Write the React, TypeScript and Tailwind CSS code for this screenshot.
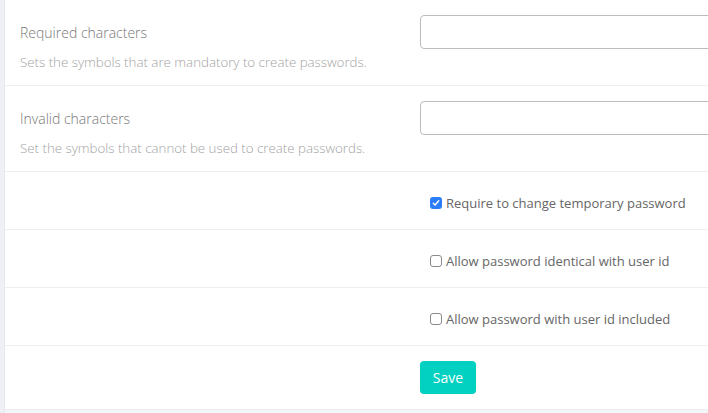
import React from "react";

function Check({ checked }: { checked?: boolean }) {
  if (checked) {
    return (
      <span className="flex h-[12px] w-[12px] shrink-0 items-center justify-center rounded-[3px] bg-[#2c7cf6]">
        <svg width="8" height="8" viewBox="0 0 8 8">
          <path d="M1.3 4.2 L3.1 6 L6.7 1.8" fill="none" stroke="#fff" strokeWidth="1.4" strokeLinecap="round" strokeLinejoin="round" />
        </svg>
      </span>
    );
  }
  return <span className="block h-[12px] w-[12px] shrink-0 rounded-[3px] border border-[#8a8a8a] bg-white" />;
}

function TextRow({ title, desc }: { title: string; desc: string }) {
  return (
    <div className="flex border-b border-[#efefef]">
      <div className="w-[415px] shrink-0 pl-[15px] pt-[23px] pb-[14px]">
        <div className="text-[14px] font-light leading-[20px] text-[#777]">{title}</div>
        <div className="mt-[10px] text-[13.3px] font-light leading-[18px] text-[#a3a3a3]">{desc}</div>
      </div>
      <div className="pt-[15px]">
        <div className="h-[34px] w-[320px] rounded-[4px] border border-[#bcbcbc] bg-white" />
      </div>
    </div>
  );
}

function CheckRow({ label, checked }: { label: string; checked?: boolean }) {
  return (
    <div className="flex border-b border-[#efefef]">
      <div className="w-[415px] shrink-0" />
      <div className="flex h-[57px] items-start pt-[22px] pl-[10px]">
        <label className="flex h-[18px] items-center gap-[4px] text-[13px] leading-[18px] text-[#666]">
          <Check checked={checked} />
          <span>{label}</span>
        </label>
      </div>
    </div>
  );
}

export default function App() {
  return (
    <div className="flex h-[413px] w-[708px] overflow-hidden bg-[#f4f5f9]" style={{ fontFamily: '"Open Sans", "Noto Sans", sans-serif' }}>
      <div className="w-[5px] shrink-0 border-r border-[#e8e9f0] bg-[#eff0f6]" />
      <div className="flex-1 overflow-hidden">
        <div className="bg-white">
          <TextRow title="Required characters" desc="Sets the symbols that are mandatory to create passwords." />
          <TextRow title="Invalid characters" desc="Set the symbols that cannot be used to create passwords." />
          <CheckRow label="Require to change temporary password" checked />
          <CheckRow label="Allow password identical with user id" />
          <CheckRow label="Allow password with user id included" />
          <div className="flex border-b border-[#eceef4]">
            <div className="w-[415px] shrink-0" />
            <div className="pt-[15px] pb-[15px]">
              <button className="h-[33px] w-[56px] rounded-[4px] bg-[#02d0c0] text-[14px] text-white">Save</button>
            </div>
          </div>
        </div>
      </div>
    </div>
  );
}
